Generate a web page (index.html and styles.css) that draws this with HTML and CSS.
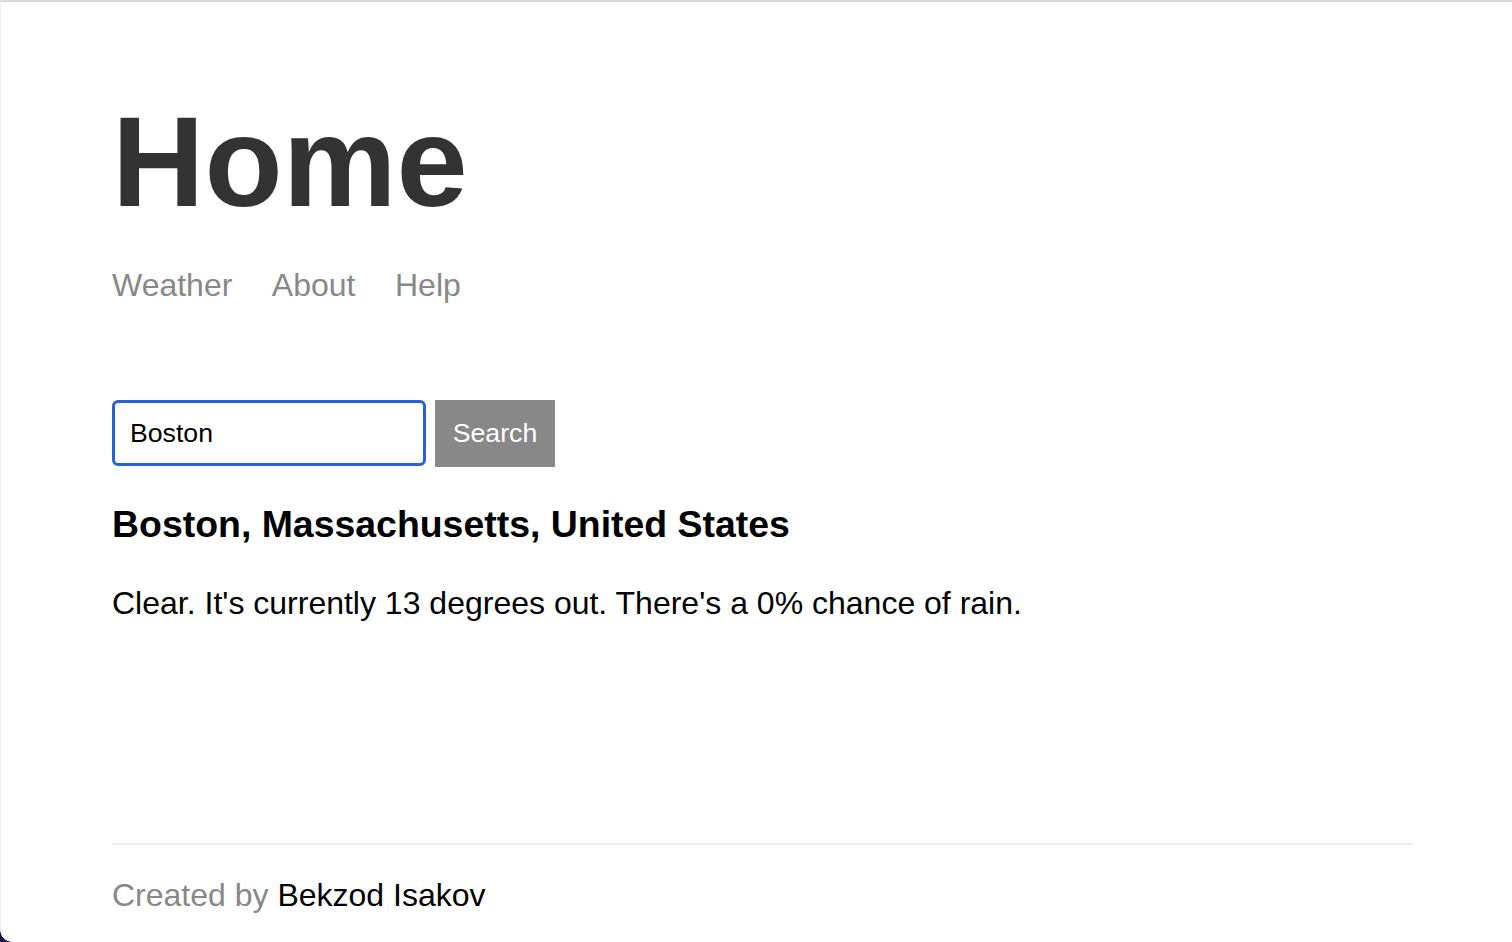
FILE: index.html
```html
<!DOCTYPE html>
<html lang="en">
<head>
<meta charset="utf-8">
<title>Weather</title>
<link rel="stylesheet" href="styles.css">
</head>
<body>
<div class="page">
  <main class="main">
    <header class="header">
      <h1 class="title">Home</h1>
      <nav class="nav">
        <a class="nav-link" href="#">Weather</a>
        <a class="nav-link" href="#">About</a>
        <a class="nav-link" href="#">Help</a>
      </nav>
    </header>
    <form class="search">
      <input class="search-input" type="text" value="Boston">
      <button class="search-button" type="button">Search</button>
    </form>
    <h3 class="location">Boston, Massachusetts, United States</h3>
    <p class="forecast">Clear. It's currently 13 degrees out. There's a 0% chance of rain.</p>
  </main>
  <footer class="footer">
    <p class="credit">Created by <span class="author">Bekzod Isakov</span></p>
  </footer>
</div>
<div class="window-corner"></div>
</body>
</html>
```

FILE: styles.css
```css
html, body {
  margin: 0;
  padding: 0;
  background: #ffffff;
}

body {
  font-family: "Liberation Sans", Arial, Helvetica, sans-serif;
  color: #000;
  border-top: 2px solid #d9d9d9;
  border-left: 1px solid #eeeeee;
  min-height: 940px;
  box-sizing: border-box;
  overflow: hidden;
}

.page {
  width: 1300px;
  margin-left: 111px;
  display: flex;
  flex-direction: column;
}

.main {
  display: flex;
  flex-direction: column;
  align-items: flex-start;
}

.title {
  margin: 96px 0 0 0;
  font-size: 128px;
  line-height: 128px;
  font-weight: 700;
  color: #333333;
}

.nav {
  display: flex;
  gap: 39.5px;
  margin-top: 43px;
}

.nav-link {
  font-size: 32px;
  line-height: 32px;
  color: #888888;
  text-decoration: none;
}

.search {
  display: flex;
  align-items: flex-start;
  gap: 9px;
  margin-top: 99px;
}

.search-input {
  box-sizing: border-box;
  width: 314px;
  height: 66px;
  margin: 0;
  padding: 0 15px;
  border: 3px solid #2b62cf;
  border-radius: 6px;
  outline: none;
  font-family: "Liberation Sans", Arial, Helvetica, sans-serif;
  font-size: 26.67px;
  color: #000;
  background: #fff;
}

.search-button {
  box-sizing: border-box;
  width: 120px;
  height: 67px;
  margin: 0;
  padding: 0 16px;
  border: none;
  border-radius: 0;
  background: #888888;
  color: #ffffff;
  font-family: "Liberation Sans", Arial, Helvetica, sans-serif;
  font-size: 26.67px;
}

.location {
  margin: 39px 0 0 0;
  font-size: 37.44px;
  line-height: 37.44px;
  font-weight: 700;
}

.forecast {
  margin: 44px 0 0 0;
  font-size: 32px;
  line-height: 32px;
}

.footer {
  margin-top: 224px;
  border-top: 2px solid #eeeeee;
  padding-top: 34px;
}

.credit {
  margin: 0;
  font-size: 32px;
  line-height: 32px;
  color: #888888;
}

.author {
  color: #000000;
}

.window-corner {
  position: fixed;
  left: 0;
  bottom: 0;
  width: 12px;
  height: 12px;
  background: radial-gradient(circle at 100% 0, transparent 11.5px, #1f1147 12px);
}
```
